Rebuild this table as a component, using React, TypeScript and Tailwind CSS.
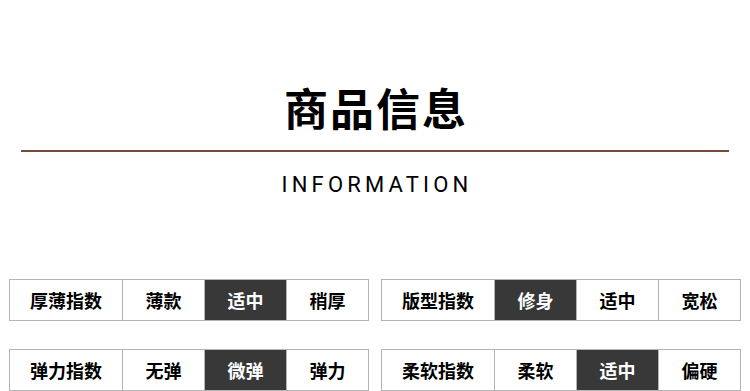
import React from "react";

type Row = { label: string; options: string[]; active: number };

const left: Row[] = [
  { label: "厚薄指数", options: ["薄款", "适中", "稍厚"], active: 1 },
  { label: "弹力指数", options: ["无弹", "微弹", "弹力"], active: 1 },
];
const right: Row[] = [
  { label: "版型指数", options: ["修身", "适中", "宽松"], active: 0 },
  { label: "柔软指数", options: ["柔软", "适中", "偏硬"], active: 1 },
];

const cjk = { fontFamily: '"Noto Sans CJK SC", "Noto Sans", sans-serif' };

function IndexTable({ row }: { row: Row }) {
  return (
    <div className="flex h-[42px] w-[360px] border border-[#b4b4b4]" style={cjk}>
      <div className="flex w-[112px] items-center justify-center text-[18px] font-bold text-black">
        {row.label}
      </div>
      {row.options.map((o, i) => (
        <div
          key={o + i}
          className={
            i === row.active
              ? "flex w-[82px] items-center justify-center border-l border-[#b4b4b4] bg-[#383838] text-[18px] font-bold text-white"
              : "flex w-[82px] items-center justify-center border-l border-[#b4b4b4] bg-white text-[18px] font-bold text-black"
          }
        >
          {o}
        </div>
      ))}
    </div>
  );
}

export default function App() {
  return (
    <div className="h-[391px] w-[750px] overflow-hidden bg-white">
      <div className="flex flex-col items-center pt-[79px]">
        <h1
          className="h-[56px] pl-[2px] text-[44px] font-bold leading-[56px] tracking-[2px] text-black"
          style={cjk}
        >
          商品信息
        </h1>
      </div>
      <div className="mx-[21px] mt-[15px] h-[2px] bg-[#7a4a38]" />
      <div className="mt-[18px] flex justify-center">
        <span
          className="pl-[4px] text-[22px] font-normal leading-[30px] tracking-[4.2px] text-black"
          style={{ fontFamily: 'Roboto, "Noto Sans", sans-serif' }}
        >
          INFORMATION
        </span>
      </div>
      <div className="mt-[79px] flex gap-[12px] px-[9px]">
        <div className="flex flex-col gap-[28px]">
          {left.map((r) => (
            <IndexTable key={r.label} row={r} />
          ))}
        </div>
        <div className="flex flex-col gap-[28px]">
          {right.map((r) => (
            <IndexTable key={r.label} row={r} />
          ))}
        </div>
      </div>
    </div>
  );
}
